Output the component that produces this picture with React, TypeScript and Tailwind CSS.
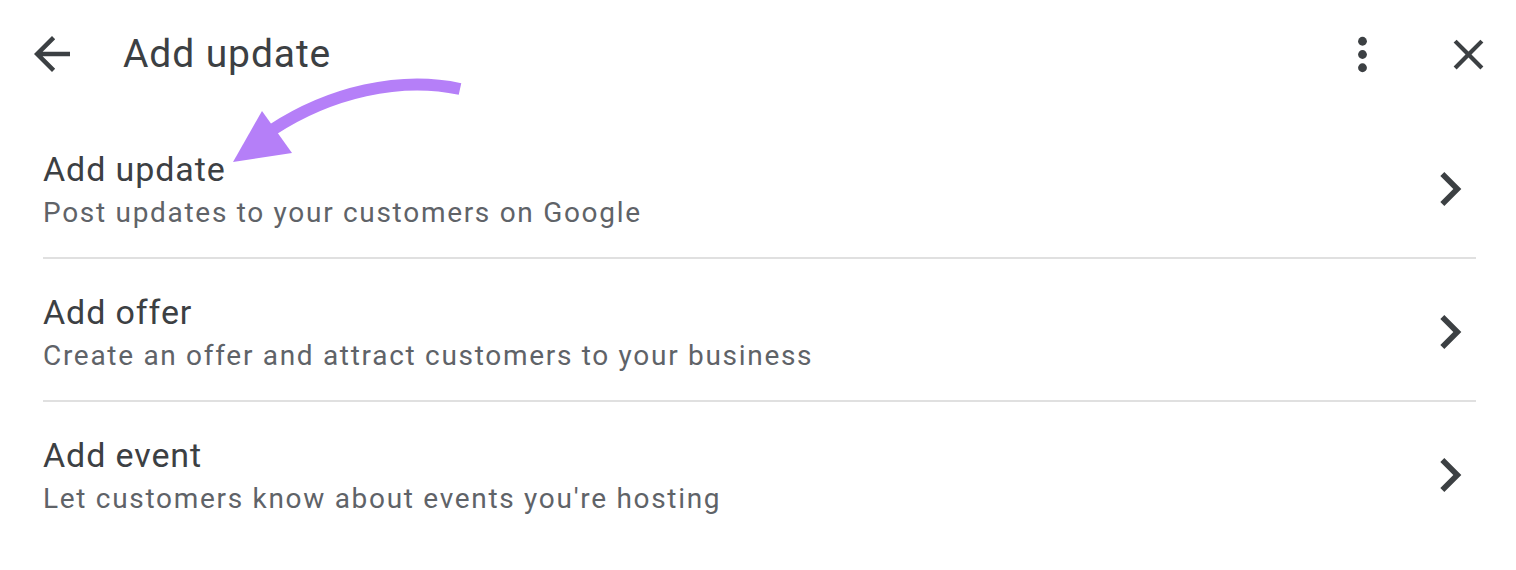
import React from "react";

const items = [
  { title: "Add update", sub: "Post updates to your customers on Google" },
  { title: "Add offer", sub: "Create an offer and attract customers to your business" },
  { title: "Add event", sub: "Let customers know about events you're hosting" },
];

function Chevron() {
  return (
    <svg width="68" height="68" viewBox="0 0 24 24" className="shrink-0 mr-[-8px]" fill="#3c4043">
      <path d="M10 6L8.59 7.41 13.17 12l-4.58 4.59L10 18l6-6z" />
    </svg>
  );
}

export default function App() {
  return (
    <div
      className="relative w-[1516px] h-[570px] bg-white overflow-hidden"
      style={{ fontFamily: "Roboto, 'Noto Sans', sans-serif" }}
    >
      <div className="flex items-center h-[108px] pl-[25px] pr-[22px]">
        <svg width="54" height="54" viewBox="0 0 24 24" fill="#3c4043" className="shrink-0">
          <path d="M20 11H7.83l5.59-5.59L12 4l-8 8 8 8 1.41-1.41L7.83 13H20v-2z" />
        </svg>
        <div className="ml-[44px] text-[39px] leading-[46px] tracking-[0.9px] text-[#3c4043]">Add update</div>
        <div className="flex-1" />
        <svg width="53" height="53" viewBox="0 0 24 24" fill="#3c4043" className="shrink-0">
          <circle cx="12" cy="6" r="2" />
          <circle cx="12" cy="12" r="2" />
          <circle cx="12" cy="18" r="2" />
        </svg>
        <svg width="51" height="51" viewBox="0 0 24 24" fill="#3c4043" className="shrink-0 ml-[54px]">
          <path d="M19 6.41L17.59 5 12 10.59 6.41 5 5 6.41 10.59 12 5 17.59 6.41 19 12 13.41 17.59 19 19 17.59 13.41 12z" />
        </svg>
      </div>
      <div className="pl-[43px] pr-[40px]">
        {items.map((it, i) => (
          <div
            key={it.title}
            className={`flex items-center justify-between pb-[27px] ${
              i === 0 ? "pt-[39px]" : "pt-[31px] border-t-2 border-[#e0e0e0]"
            }`}
          >
            <div>
              <div className="text-[34px] leading-[44px] tracking-[0.9px] text-[#3c4043]">{it.title}</div>
              <div className="mt-[5px] text-[28px] leading-[34px] tracking-[1.7px] text-[#5f6368]">{it.sub}</div>
            </div>
            <Chevron />
          </div>
        ))}
      </div>
      <svg
        className="absolute top-0 left-0 pointer-events-none"
        width="1516"
        height="200"
        viewBox="0 0 1516 200"
      >
        <path d="M460 89 C 400 76, 330 92, 272 130" stroke="#b57ff8" strokeWidth="12" fill="none" />
        <polygon points="233,162 262,111 292,153" fill="#b57ff8" />
      </svg>
    </div>
  );
}
